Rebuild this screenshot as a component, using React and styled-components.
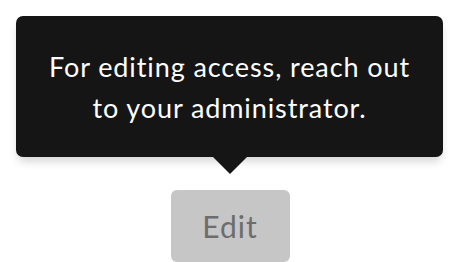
import styled, { createGlobalStyle } from "styled-components";

const GlobalStyle = createGlobalStyle`
  html, body {
    margin: 0;
    padding: 0;
    background: #ffffff;
  }
  body {
    font-family: Lato, "Open Sans", sans-serif;
  }
`;

const Page = styled.div`
  width: 460px;
  height: 262px;
  overflow: hidden;
  display: flex;
  flex-direction: column;
  align-items: center;
  padding-top: 16px;
  box-sizing: border-box;
`;

const Tooltip = styled.div`
  position: relative;
  width: 427px;
  height: 141px;
  box-sizing: border-box;
  margin-left: -1px;
  display: flex;
  align-items: center;
  justify-content: center;
  background: #151515;
  border-radius: 7px;
  box-shadow: 0 6px 10px -2px rgba(3, 3, 3, 0.18);
  color: #ffffff;
  font-size: 27px;
  line-height: 41px;
  letter-spacing: 0.9px;
  text-align: center;
  padding: 0 20px;

  &::after {
    content: "";
    position: absolute;
    left: 50%;
    bottom: -12px;
    width: 24px;
    height: 24px;
    background: #151515;
    transform: translateX(-50%) rotate(45deg);
  }
`;

const TooltipText = styled.span`
  position: relative;
  z-index: 1;
  margin-top: 1px;
`;

const EditButton = styled.button`
  margin-top: 33px;
  width: 119px;
  height: 72px;
  border: 0;
  border-radius: 6px;
  background: #c6c6c6;
  color: #6d6d6d;
  font-family: inherit;
  font-size: 30px;
  letter-spacing: 1px;
  padding: 0;
  cursor: not-allowed;
`;

export default function App() {
  return (
    <Page>
      <GlobalStyle />
      <Tooltip>
        <TooltipText>For editing access, reach out to your administrator.</TooltipText>
      </Tooltip>
      <EditButton disabled>Edit</EditButton>
    </Page>
  );
}
